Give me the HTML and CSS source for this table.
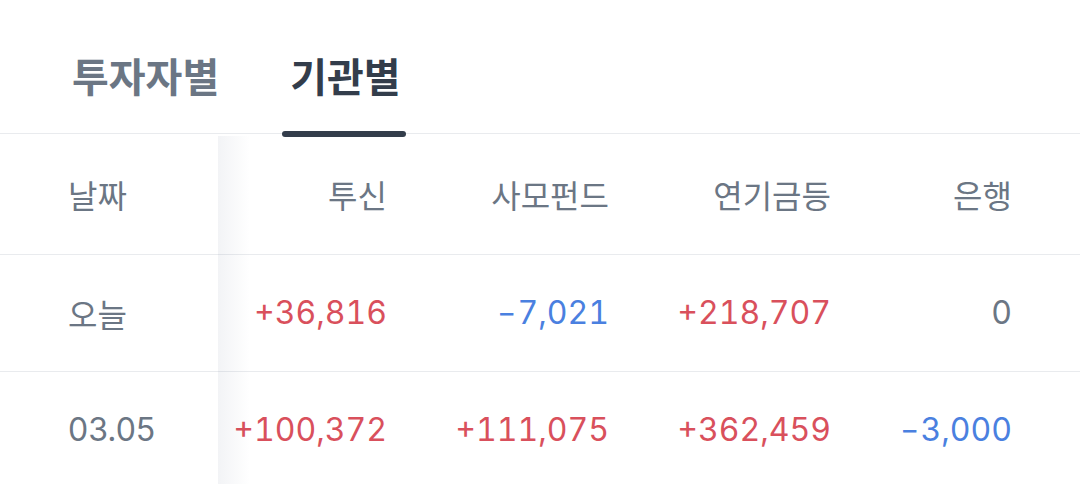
FILE: index.html
```html
<!DOCTYPE html>
<html lang="ko">
<head>
<meta charset="utf-8">
<link rel="stylesheet" href="styles.css">
</head>
<body>
<div class="tabs">
  <div class="tab">투자자별</div>
  <div class="tab active">기관별</div>
</div>
<div class="table">
  <div class="shadow"></div>
  <div class="row head">
    <div class="cell first">날짜</div>
    <div class="cell">투신</div>
    <div class="cell">사모펀드</div>
    <div class="cell">연기금등</div>
    <div class="cell">은행</div>
  </div>
  <div class="row">
    <div class="cell first">오늘</div>
    <div class="cell num up">+36,816</div>
    <div class="cell num down"><span class="minus">-</span>7,021</div>
    <div class="cell num up">+218,707</div>
    <div class="cell num">0</div>
  </div>
  <div class="row">
    <div class="cell first num">03.05</div>
    <div class="cell num up">+100,372</div>
    <div class="cell num up">+111,075</div>
    <div class="cell num up">+362,459</div>
    <div class="cell num down"><span class="minus">-</span>3,000</div>
  </div>
</div>
</body>
</html>
```
FILE: styles.css
```css
* { box-sizing: border-box; }
html, body { margin: 0; padding: 0; background: #fff; }
body {
  width: 1080px;
  height: 484px;
  overflow: hidden;
  font-family: "Noto Sans CJK KR", "Noto Sans", sans-serif;
  color: #6b7684;
}
.tabs {
  display: flex;
  gap: 57px;
  height: 134px;
  padding: 48px 0 0 65px;
  border-bottom: 1px solid #e9ebee;
}
.tab {
  position: relative;
  padding: 0 7px;
  font-size: 40px;
  font-weight: 700;
  line-height: 54px;
  color: #6b7684;
  height: 85px;
}
.tab.active { color: #333d4b; }
.tab.active::after {
  content: "";
  position: absolute;
  left: -1px;
  right: 2px;
  bottom: -4px;
  height: 6px;
  border-radius: 3px;
  background: #333d4b;
}
.table { position: relative; }
.shadow {
  position: absolute;
  left: 218px;
  top: 2px;
  bottom: 0;
  width: 32px;
  background: linear-gradient(to right, rgba(40, 60, 100, 0.06), rgba(40, 60, 100, 0));
  z-index: 2;
}
.row {
  display: grid;
  grid-template-columns: 218px 169px 222px 222px 181px;
  padding-right: 68px;
  height: 117px;
  border-bottom: 1px solid #e9ebee;
  align-items: center;
}
.row.head { height: 121px; }
.cell {
  text-align: right;
  font-size: 32px;
  line-height: 40px;
  white-space: nowrap;
}
.cell.first { text-align: left; padding-left: 68px; }
.num {
  font-family: "Inter", "Roboto", sans-serif;
  font-size: 32px;
  font-variant-numeric: tabular-nums;
}
.cell.first.num { font-variant-numeric: proportional-nums; }
.minus {
  display: inline-block;
  padding-left: 3px;
  margin-right: 1px;
  transform: scaleX(1.3);
}
.up { color: #d9505c; }
.down { color: #4a80e0; }
```
